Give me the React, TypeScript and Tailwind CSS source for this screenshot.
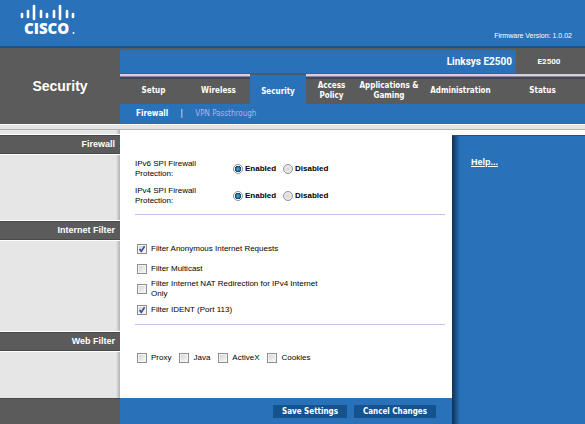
import { useState, type ReactNode } from "react";

const tabs = [
  { name: "Setup", width: "w-[67px]" },
  { name: "Wireless", width: "w-[63px]" },
  { name: "Security", width: "w-[56px]" },
  { name: "Access Policy", width: "w-[51px] px-1" },
  { name: "Applications & Gaming", width: "w-[64px]" },
  { name: "Administration", width: "w-[79px]" },
  { name: "Status", width: "flex-1" },
];

const logoBars = [
  [22, 14, 17],
  [28, 11, 17],
  [34, 6, 19],
  [41, 11, 17],
  [47, 14, 17],
  [54, 11, 17],
  [60, 6, 19],
  [67, 11, 17],
  [73, 14, 17],
];

function Logo() {
  return (
    <svg width="80" height="38" viewBox="0 0 80 38" role="img" aria-label="Cisco">
      {logoBars.map(([x, y1, y2]) => (
        <line key={x} x1={x} x2={x} y1={y1} y2={y2} stroke="#fff" strokeWidth="2.6" strokeLinecap="round" />
      ))}
      <text x="24" y="34" fill="#fff" className="font-['Open_Sans',sans-serif] text-[15px] font-extrabold">
        CISCO
      </text>
      <circle cx="73.5" cy="33" r="1" fill="#fff" />
    </svg>
  );
}

function Section({ title, className, children }: { title: string; className: string; children: ReactNode }) {
  return (
    <section className={`flex ${className}`}>
      <div className="w-[120px] shrink-0 bg-linear-to-l from-[#b2b2b2] to-[#e6e6e6] to-[4px]">
        <h2 className="h-[19px] border-y border-[#494949] bg-[#5b5b5b] pr-[5px] text-right text-[9px] leading-[17px] font-bold text-white shadow-[0_1px_#fff,0_-1px_#fff]">
          {title}
        </h2>
      </div>
      <div className="min-w-0 flex-1 bg-white pr-[7px] pl-[15px]">{children}</div>
    </section>
  );
}

function FirewallRow({ version }: { version: string }) {
  const [value, setValue] = useState("Enabled");
  return (
    <div role="radiogroup" aria-labelledby={`${version}-label`} className="flex h-[27px] items-center">
      <span id={`${version}-label`} className="w-[98px] leading-[10px]">
        {version} SPI Firewall
        <br />
        Protection:
      </span>
      {["Enabled", "Disabled"].map((option) => (
        <label key={option} className="flex w-[50px] items-center gap-[2px] font-bold">
          <input
            type="radio"
            name={version}
            checked={value === option}
            onChange={() => setValue(option)}
            className="size-[10px] shrink-0 appearance-none rounded-full border border-[#8e8f8f] bg-[radial-gradient(#d5d5d5,#fafafa)] checked:bg-[radial-gradient(circle,#4cc0ea_0px,#123f63_3px,#ffffff_3px)]"
          />
          {option}
        </label>
      ))}
    </div>
  );
}

function Tick({ label, checked = false, className = "" }: { label: string; checked?: boolean; className?: string }) {
  return (
    <label className={`flex items-center gap-1 leading-[10px] ${className}`}>
      <span className="relative size-[10px] shrink-0">
        <input
          type="checkbox"
          defaultChecked={checked}
          className="peer block size-[10px] appearance-none border border-[#8e8f8f] bg-linear-to-br from-[#cfd2d5] to-[#fbfbfb] shadow-[inset_0_0_0_1px_#f4f4f4]"
        />
        <svg viewBox="0 0 10 10" className="pointer-events-none absolute inset-0 hidden size-[10px] peer-checked:block">
          <path d="M2.5 5 L4.3 7.3 L7.6 2.2" fill="none" stroke="#39509f" strokeWidth="1.6" />
        </svg>
      </span>
      <span>{label}</span>
    </label>
  );
}

export default function App() {
  const [active, setActive] = useState("Security");
  return (
    <div className="flex min-h-screen flex-col bg-white font-['Liberation_Sans',Arial,sans-serif] text-[8px] text-black">
      <header className="flex h-[48px] items-end justify-between border-b-2 border-[#1d5288] bg-[#2971b9]">
        <div className="self-start">
          <Logo />
        </div>
        <p className="pr-[13px] pb-[5px] text-[7px] leading-[10px] text-white">Firmware Version: 1.0.02</p>
      </header>

      <div className="flex h-[76px] bg-[#5b5b5b] text-white">
        <h1 className="flex w-[120px] shrink-0 items-center justify-center text-[14px] font-bold">Security</h1>
        <div className="flex min-w-0 flex-1 flex-col pt-0.5 font-['DejaVu_Sans_Condensed','DejaVu_Sans',sans-serif]">
          <div className="flex h-[23px] items-center font-['Liberation_Sans',Arial,sans-serif] font-bold">
            <p className="flex h-full flex-1 items-center justify-end bg-[#2971b9] pr-1 font-['Roboto',sans-serif] text-[10px]">
              Linksys E2500
            </p>
            <p className="w-[69px] pr-[3px] text-center font-['Roboto',sans-serif]">E2500</p>
          </div>
          <nav className="flex h-[31px]" aria-label="Main">
            {tabs.map(({ name, width }) => (
              <button
                key={name}
                type="button"
                onClick={() => setActive(name)}
                className={`flex items-center justify-center text-center leading-[10px] font-bold ${width} ${
                  active === name
                    ? "border-t-2 border-[#4f5a68] bg-[#2971b9] pt-1"
                    : "border-t border-[#5b5b5b] bg-[linear-gradient(#d5d1dc_0_2px,#8d87a8_2px_3px,#474747_3px_5px,#5b5b5b_5px)] pt-1"
                }`}
              >
                {name}
              </button>
            ))}
          </nav>
          <nav className="flex flex-1 items-center bg-[#2971b9] pl-4" aria-label="Security">
            <a href="#firewall" className="font-bold">
              Firewall
            </a>
            <span className="w-[27px] text-center">|</span>
            <a href="#vpn" className="text-[#a9b4ee]">
              VPN Passthrough
            </a>
          </nav>
        </div>
      </div>

      <div className="h-[6px] border-t border-b border-t-white border-b-[#b4b4b4] bg-[#e4e4e4]" />

      <div className="flex flex-1">
        <main className="flex min-w-0 flex-1 flex-col">
          <div className="h-[5px] w-[120px] bg-linear-to-l from-[#b2b2b2] to-[#e6e6e6] to-[4px]" />
          <Section title="Firewall" className="h-[86px]">
            <div className="border-b border-[#c3c1ea] pt-[20px] pb-[5px]">
              <FirewallRow version="IPv6" />
              <FirewallRow version="IPv4" />
            </div>
          </Section>
          <Section title="Internet Filter" className="h-[111px]">
            <div className="flex flex-col border-b border-[#c3c1ea] pt-[23px] pb-[9px] pl-[2px]">
              <Tick label="Filter Anonymous Internet Requests" checked />
              <Tick label="Filter Multicast" className="mt-[10px]" />
              <Tick label="Filter Internet NAT Redirection for IPv4 Internet Only" className="mt-[5px] w-[190px]" />
              <Tick label="Filter IDENT (Port 113)" checked className="mt-[6px]" />
            </div>
          </Section>
          <Section title="Web Filter" className="min-h-[66px] flex-1">
            <div className="flex gap-2 pt-[21px] pl-[2px]">
              <Tick label="Proxy" />
              <Tick label="Java" />
              <Tick label="ActiveX" />
              <Tick label="Cookies" />
            </div>
          </Section>
          <footer className="flex h-[26px] bg-[#2971b9]">
            <div className="w-[120px] border-t border-[#494949] bg-[#5b5b5b]" />
            <div className="flex flex-1 items-center justify-end gap-[7px] pr-4 font-['DejaVu_Sans_Condensed','DejaVu_Sans',sans-serif] font-bold text-white">
              <button type="button" className="h-[13px] w-[74px] bg-[#15538f] leading-[13px]">
                Save Settings
              </button>
              <button type="button" className="h-[13px] w-[82px] bg-[#15538f] leading-[13px]">
                Cancel Changes
              </button>
            </div>
          </footer>
        </main>
        <aside className="w-[133px] shrink-0 pt-[5px]">
          <div className="h-full border-t border-[#1d5288] bg-linear-to-r from-[#0f3157] to-[#2971b9] to-[8px] pt-[20px] pl-[19px]">
            <a href="#help" className="text-[9px] font-bold text-white underline">
              Help...
            </a>
          </div>
        </aside>
      </div>
    </div>
  );
}
